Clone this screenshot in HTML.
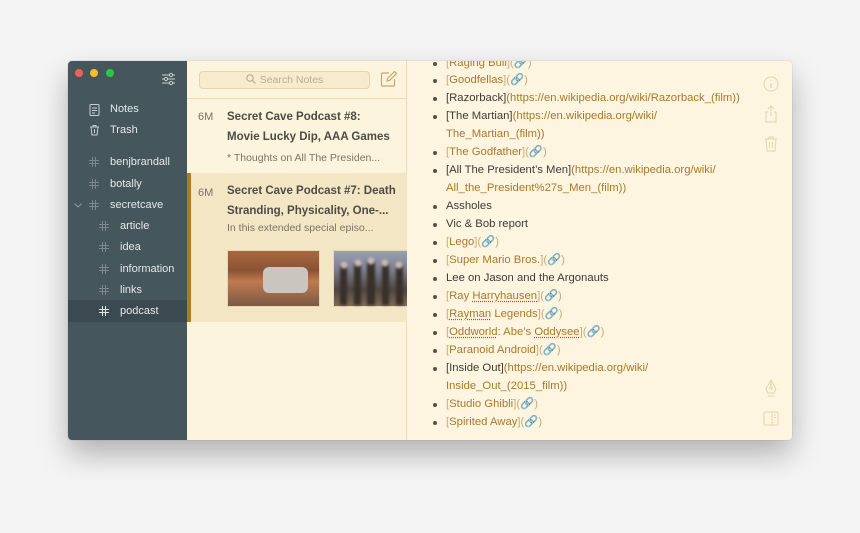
<!DOCTYPE html>
<html><head><meta charset="utf-8"><style>
*{margin:0;padding:0;box-sizing:border-box}
body{width:860px;height:533px;background:#f4f4f4;font-family:"Liberation Sans",sans-serif;position:relative;overflow:hidden}
.win{position:absolute;left:68px;top:61px;width:724px;height:379px;border-radius:4px;overflow:hidden;box-shadow:0 14px 30px rgba(0,0,0,.28),0 0 1px rgba(0,0,0,.3)}
.side{position:absolute;left:0;top:0;width:119px;height:379px;background:#46565d;color:#e4e8e8;font-size:11px}
.dot{position:absolute;top:8px;width:8px;height:8px;border-radius:50%}
.item{position:absolute;left:0;width:119px;height:22px;line-height:22px}
.item span{position:absolute}
.hs{position:absolute;top:6px}
.list{position:absolute;left:119px;top:0;width:220px;height:379px;background:#fcf4dc;border-right:1px solid #e8dcbc}
.search{position:absolute;left:12px;top:10px;width:171px;height:18px;border:1px solid #e3d5b0;border-radius:4px;background:#f6ebcf;color:#b9ad90;font-size:10.5px;line-height:16px;text-align:center}
.note{position:absolute;left:0;width:220px}
.age{position:absolute;left:11px;color:#7a7263;font-size:11px}
.ttl{position:absolute;left:40px;color:#4f4b44;font-size:11.5px;font-weight:bold;line-height:20px;white-space:nowrap}
.sub{position:absolute;left:40px;color:#7b7466;font-size:10.5px;white-space:nowrap}
.ed{position:absolute;left:339px;top:0;width:385px;height:379px;background:#fdf5e0}
.ln{position:absolute;left:39px;font-size:11.3px;color:#3f3b35;white-space:nowrap;height:18px;line-height:18px}
.ln::before{content:"";position:absolute;left:-13px;top:8px;width:4px;height:4px;border-radius:50%;background:#5a5045}
.ln.c::before{display:none}
.g{color:#a9782b}.b{color:#c8ab78}
.u{text-decoration:underline dotted #d33;text-underline-offset:2px}
.ic{position:absolute;left:356px}
</style></head><body>
<svg width="0" height="0" style="position:absolute"><defs><g id="h" stroke="#7c8a8f" stroke-width="1" fill="none"><path d="M3.5 0v10M6.5 0v10M0 3.5h10M0 6.5h10"/></g></defs></svg>
<div class="win">
 <div class="side">
  <div class="dot" style="left:7px;background:#fc5f57"></div>
  <div class="dot" style="left:22px;background:#fdbc2e"></div>
  <div class="dot" style="left:38px;background:#28c840"></div>
  <svg style="position:absolute;left:93px;top:11px" width="15" height="14" stroke="#c9d0d2" stroke-width="1" fill="none"><path d="M1 3h13M1 7h13M1 11h13"/><circle cx="10" cy="3" r="1.6" fill="#46565d"/><circle cx="5" cy="7" r="1.6" fill="#46565d"/><circle cx="10" cy="11" r="1.6" fill="#46565d"/></svg>
  <div class="item" style="top:37px"><svg style="position:absolute;left:21px;top:6px" width="11" height="12" stroke="#c9d0d2" fill="none"><rect x="1" y="0.5" width="9" height="11" rx="1"/><path d="M3 4h5M3 6.5h5M3 9h3"/></svg><span style="left:42px">Notes</span></div>
  <div class="item" style="top:58px"><svg style="position:absolute;left:21px;top:5px" width="11" height="12" stroke="#c9d0d2" fill="none"><path d="M1 3h9M4 3V1.5h3V3M2 3l1 8h5l1-8M5.5 5v4"/></svg><span style="left:42px">Trash</span></div>
  <div class="item" style="top:90px"><svg class="hs" style="left:21px" width="10" height="10"><use href="#h"/></svg><span style="left:42px">benjbrandall</span></div>
  <div class="item" style="top:112px"><svg class="hs" style="left:21px" width="10" height="10"><use href="#h"/></svg><span style="left:42px">botally</span></div>
  <div class="item" style="top:133px"><svg style="position:absolute;left:6px;top:9px" width="8" height="5" stroke="#8e9a9e" fill="none"><path d="M0.5 0.5l3.5 3.5 3.5-3.5"/></svg><svg class="hs" style="left:21px" width="10" height="10"><use href="#h"/></svg><span style="left:42px">secretcave</span></div>
  <div class="item" style="top:154px"><svg class="hs" style="left:31px" width="10" height="10"><use href="#h"/></svg><span style="left:52px">article</span></div>
  <div class="item" style="top:175px"><svg class="hs" style="left:31px" width="10" height="10"><use href="#h"/></svg><span style="left:52px">idea</span></div>
  <div class="item" style="top:197px"><svg class="hs" style="left:31px" width="10" height="10"><use href="#h"/></svg><span style="left:52px">information</span></div>
  <div class="item" style="top:218px"><svg class="hs" style="left:31px" width="10" height="10"><use href="#h"/></svg><span style="left:52px">links</span></div>
  <div class="item" style="top:239px;background:#3b4a51"><svg class="hs" style="left:31px" width="10" height="10"><path d="M3.5 0v10M6.5 0v10M0 3.5h10M0 6.5h10" stroke="#dfe4e5" fill="none"/></svg><span style="left:52px">podcast</span></div>
 </div>
 <div class="list">
  <div class="search"><svg width="10" height="10" style="vertical-align:-1px;margin-right:4px" stroke="#b9ad90" fill="none" stroke-width="1.2"><circle cx="4" cy="4" r="3.2"/><path d="M6.4 6.4l3 3"/></svg>Search Notes</div>
  <svg style="position:absolute;left:193px;top:10px" width="17" height="17" stroke="#c4a86e" fill="none" stroke-width="1.2"><path d="M9 2H2.5a1 1 0 0 0-1 1v11a1 1 0 0 0 1 1h11a1 1 0 0 0 1-1V8"/><path d="M7 10l.5-2.5 7-7 2 2-7 7z"/></svg>
  <div style="position:absolute;left:0;top:37px;width:220px;height:1px;background:#e8dcbc"></div>
  <div class="note" style="top:38px;height:74px">
   <div class="age" style="top:12px">6M</div>
   <div class="ttl" style="top:8px">Secret Cave Podcast #8:<br>Movie Lucky Dip, AAA Games</div>
   <div class="sub" style="top:53px">* Thoughts on All The Presiden...</div>
  </div>
  <div style="position:absolute;left:40px;top:112px;width:180px;height:1px;background:#ece0c2"></div>
  <div class="note" style="top:112px;height:149px;background:#f3e6c5;border-left:4px solid #ad7e1f">
   <div class="age" style="top:14px;left:7px">6M</div>
   <div class="ttl" style="top:8px;left:36px">Secret Cave Podcast #7: Death<br>Stranding, Physicality, One-...</div>
   <div class="sub" style="top:49px;left:36px">In this extended special episo...</div>
   <div style="position:absolute;left:36px;top:77px;width:93px;height:57px;background:linear-gradient(180deg,#a8683e 0%,#8a5234 35%,#c07a50 55%,#7a5a45 100%);border:1px solid #e6d6b6">
    <div style="position:absolute;left:35px;top:16px;width:45px;height:26px;background:#c9c6c0;border-radius:6px"></div></div>
   <div style="position:absolute;left:142px;top:77px;width:78px;height:57px;background:linear-gradient(180deg,#9aa0b5 0%,#7a7d8e 35%,#4f4642 70%,#806a52 100%);border:1px solid #e6d6b6">
    <svg width="78" height="57" style="position:absolute;left:0;top:0;filter:blur(1.2px)"><g fill="#3a302b"><rect x="6" y="14" width="7" height="40"/><rect x="20" y="12" width="7" height="42"/><rect x="33" y="10" width="8" height="44"/><rect x="48" y="12" width="7" height="42"/><rect x="62" y="14" width="7" height="40"/></g><g fill="#c8bcae"><circle cx="10" cy="14" r="3.5"/><circle cx="24" cy="12" r="3.5"/><circle cx="37" cy="10" r="3.5"/><circle cx="51" cy="12" r="3.5"/><circle cx="65" cy="14" r="3.5"/></g></svg></div>
  </div>
 </div>
 <div class="ed">
  <div class="ln g" style="top:-7px"><span class="b">[</span>Raging Bull<span class="b">](</span>🔗<span class="b">)</span></div>
  <div class="ln g" style="top:10px"><span class="b">[</span>Goodfellas<span class="b">](</span>🔗<span class="b">)</span></div>
  <div class="ln" style="top:28px">[Razorback]<span class="g">(https://en.wikipedia.org/wiki/Razorback_(film))</span></div>
  <div class="ln" style="top:46px">[The Martian]<span class="g">(https://en.wikipedia.org/wiki/</span></div>
  <div class="ln c g" style="top:64px">The_Martian_(film))</div>
  <div class="ln g" style="top:82px"><span class="b">[</span>The Godfather<span class="b">](</span>🔗<span class="b">)</span></div>
  <div class="ln" style="top:100px">[All The President’s Men]<span class="g">(https://en.wikipedia.org/wiki/</span></div>
  <div class="ln c g" style="top:118px">All_the_President%27s_Men_(film))</div>
  <div class="ln" style="top:136px">Assholes</div>
  <div class="ln" style="top:154px">Vic &amp; Bob report</div>
  <div class="ln g" style="top:172px"><span class="b">[</span>Lego<span class="b">](</span>🔗<span class="b">)</span></div>
  <div class="ln g" style="top:190px"><span class="b">[</span>Super Mario Bros.<span class="b">](</span>🔗<span class="b">)</span></div>
  <div class="ln" style="top:208px">Lee on Jason and the Argonauts</div>
  <div class="ln g" style="top:226px"><span class="b">[</span>Ray <span class="u">Harryhausen</span><span class="b">](</span>🔗<span class="b">)</span></div>
  <div class="ln g" style="top:244px"><span class="b">[</span><span class="u">Rayman</span> Legends<span class="b">](</span>🔗<span class="b">)</span></div>
  <div class="ln g" style="top:262px"><span class="b">[</span><span class="u">Oddworld</span>: Abe’s <span class="u">Oddysee</span><span class="b">](</span>🔗<span class="b">)</span></div>
  <div class="ln g" style="top:280px"><span class="b">[</span>Paranoid Android<span class="b">](</span>🔗<span class="b">)</span></div>
  <div class="ln" style="top:298px">[Inside Out]<span class="g">(https://en.wikipedia.org/wiki/</span></div>
  <div class="ln c g" style="top:316px">Inside_Out_(2015_film))</div>
  <div class="ln g" style="top:334px"><span class="b">[</span>Studio Ghibli<span class="b">](</span>🔗<span class="b">)</span></div>
  <div class="ln g" style="top:352px"><span class="b">[</span>Spirited Away<span class="b">](</span>🔗<span class="b">)</span></div>
  <svg class="ic" style="top:15px" width="16" height="16" stroke="#e2d4b0" fill="none"><circle cx="8" cy="8" r="7"/><path d="M8 7v5M8 4.5v.5" stroke-width="1.4"/></svg>
  <svg class="ic" style="top:44px" width="16" height="18" stroke="#e2d4b0" fill="none"><path d="M5 7H3v10h10V7h-2M8 1v10M5 4l3-3 3 3"/></svg>
  <svg class="ic" style="top:75px" width="16" height="16" stroke="#e2d4b0" fill="none"><path d="M2 3h12M6 3V1h4v2M3 3l1 12h8l1-12M6.5 6v6M9.5 6v6"/></svg>
  <svg class="ic" style="top:318px" width="16" height="18" stroke="#e2d4b0" fill="none"><path d="M8 1l5 9-2 4H5l-2-4zM5 17h6M8 1v7"/><circle cx="8" cy="9" r="1.3"/></svg>
  <svg class="ic" style="top:350px" width="16" height="16" stroke="#e2d4b0" fill="none"><rect x="1" y="1" width="14" height="13" rx="1"/><path d="M9 1v13M11 4h2M11 6.5h2"/></svg>
 </div>
</div>
</body></html>
